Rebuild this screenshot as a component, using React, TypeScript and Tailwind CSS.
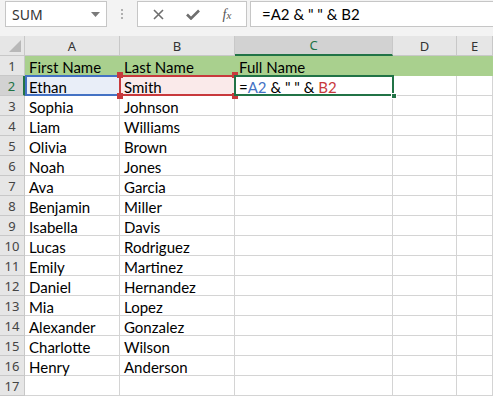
import React from "react";

const rows: [string, string][] = [
  ["Ethan", "Smith"],
  ["Sophia", "Johnson"],
  ["Liam", "Williams"],
  ["Olivia", "Brown"],
  ["Noah", "Jones"],
  ["Ava", "Garcia"],
  ["Benjamin", "Miller"],
  ["Isabella", "Davis"],
  ["Lucas", "Rodriguez"],
  ["Emily", "Martinez"],
  ["Daniel", "Hernandez"],
  ["Mia", "Lopez"],
  ["Alexander", "Gonzalez"],
  ["Charlotte", "Wilson"],
  ["Henry", "Anderson"],
];

const cellFont = { fontFamily: "Lato, 'Open Sans', sans-serif" };
const uiFont = { fontFamily: "'Noto Sans', 'Open Sans', sans-serif" };

function RowHead({ n, sel }: { n: number; sel?: boolean }) {
  return (
    <div
      className={
        "h-[20px] flex items-center justify-center pt-[2px] leading-none text-[13px] border-b border-[#c8c8c8] " +
        (sel
          ? "bg-[#d2d2d2] border-r-2 border-r-[#217346] text-[#217346]"
          : "bg-[#e6e6e6] border-r border-r-[#c8c8c8] text-[#444]")
      }
      style={uiFont}
    >
      {n}
    </div>
  );
}

function Cell({ children, green }: { children?: React.ReactNode; green?: boolean }) {
  return (
    <div
      className={
        "h-[20px] pl-[4px] pt-[2px] leading-[18px] text-[15px] text-black whitespace-nowrap " +
        (green ? "bg-[#a9d08e] border-b border-[#a9d08e]" : "border-r border-b border-[#d4d4d4]")
      }
      style={cellFont}
    >
      {children}
    </div>
  );
}

function ColHead({ l }: { l: string }) {
  return (
    <div
      className="h-[20px] bg-[#e6e6e6] border-r border-b border-[#c8c8c8] flex items-center justify-center pt-[1px] leading-none text-[13px] text-[#333]"
      style={uiFont}
    >
      {l}
    </div>
  );
}

export default function App() {
  return (
    <div className="w-[493px] h-[398px] overflow-hidden bg-white relative">
      {/* Toolbar */}
      <div className="h-[36px] bg-[#f3f3f3] flex items-start pt-[1px]">
        <div
          className="ml-[5px] w-[102px] h-[26px] bg-white border border-[#c6c6c6] flex items-center justify-between pl-[6px] pr-[6px] text-[14px] text-[#333]"
          style={uiFont}
        >
          <span>SUM</span>
          <svg width="9" height="5" viewBox="0 0 9 5">
            <path d="M0 0 L9 0 L4.5 5 Z" fill="#7a7a7a" />
          </svg>
        </div>
        <div className="w-[30px] h-[26px] flex flex-col items-center justify-center gap-[2px]">
          <div className="w-[2px] h-[2px] bg-[#b0b0b0]" />
          <div className="w-[2px] h-[2px] bg-[#b0b0b0]" />
          <div className="w-[2px] h-[2px] bg-[#b0b0b0]" />
        </div>
        <div className="w-[110px] h-[26px] bg-white border border-[#c6c6c6] flex items-center">
          <div className="w-[38px] flex justify-center pl-[3px]">
            <svg width="11" height="11" viewBox="0 0 11 11">
              <path d="M1 1 L10 10 M10 1 L1 10" stroke="#6e6e6e" strokeWidth="1.6" />
            </svg>
          </div>
          <div className="w-[34px] flex justify-center">
            <svg width="14" height="11" viewBox="0 0 14 11">
              <path d="M1 5.5 L5 9.5 L13 1.5" stroke="#6e6e6e" strokeWidth="2.6" fill="none" />
            </svg>
          </div>
          <div
            className="w-[34px] flex justify-center text-[14px] italic text-[#555]"
            style={{ fontFamily: "'Liberation Serif', serif" }}
          >
            f<span className="text-[11px] mt-[3px]">x</span>
          </div>
        </div>
        <div
          className="ml-[3px] flex-1 h-[26px] bg-white border border-r-0 border-[#c6c6c6] flex items-center pl-[11px] text-[15px] text-black"
          style={cellFont}
        >
          =A2 &amp; " " &amp; B2
        </div>
      </div>

      {/* Grid */}
      <div className="grid grid-cols-[25px_95px_115px_158px_64px_1fr]">
        {/* header */}
        <div className="h-[20px] bg-[#e6e6e6] border-r border-b border-[#c8c8c8] relative">
          <svg className="absolute right-[3px] bottom-[3px]" width="12" height="12" viewBox="0 0 12 12">
            <path d="M12 0 L12 12 L0 12 Z" fill="#b8b8b8" />
          </svg>
        </div>
        <ColHead l="A" />
        <ColHead l="B" />
        <div
          className="h-[20px] bg-[#d2d2d2] border-r border-[#c8c8c8] border-b-2 border-b-[#217346] flex items-center justify-center pt-[1px] leading-none text-[13px] text-[#217346]"
          style={uiFont}
        >
          C
        </div>
        <ColHead l="D" />
        <ColHead l="E" />

        {/* row 1 */}
        <RowHead n={1} />
        <Cell green>First Name</Cell>
        <Cell green>Last Name</Cell>
        <Cell green>Full Name</Cell>
        <Cell green />
        <Cell green />

        {/* row 2 */}
        <RowHead n={2} sel />
        <div className="relative z-10">
          <div
            className="h-[20px] pl-[4px] pt-[2px] leading-[18px] text-[15px] bg-[#e9eef8]"
            style={cellFont}
          >
            Ethan
          </div>
          <div className="absolute -top-[1px] left-0 -right-[1px] bottom-0 border-2 border-[#4472c4]" />
        </div>
        <div className="relative z-20">
          <div
            className="h-[20px] pl-[4px] pt-[2px] leading-[18px] text-[15px] bg-[#faeaea]"
            style={cellFont}
          >
            Smith
          </div>
          <div className="absolute -top-[1px] -left-[1px] -right-[1px] bottom-0 border-2 border-[#c8393c]" />
          <div className="absolute -top-[4px] -left-[3px] w-[6px] h-[6px] bg-[#c8393c]" />
          <div className="absolute -bottom-[3px] -left-[3px] w-[6px] h-[6px] bg-[#c8393c]" />
          <div className="absolute -top-[4px] -right-[3px] w-[6px] h-[6px] bg-[#c8393c]" />
          <div className="absolute -bottom-[3px] -right-[3px] w-[6px] h-[6px] bg-[#c8393c]" />
        </div>
        <div className="relative z-30">
          <div
            className="h-[20px] pl-[4px] pt-[2px] leading-[18px] text-[15px] bg-white whitespace-nowrap"
            style={cellFont}
          >
            =<span className="text-[#4472c4]">A2</span> &amp; " " &amp;{" "}
            <span className="text-[#c8393c]">B2</span>
          </div>
          <div className="absolute -top-[1px] -left-[1px] -right-[1px] bottom-0 border-2 border-[#217346]" />
          <div className="absolute -bottom-[3px] -right-[4px] w-[6px] h-[6px] bg-[#217346] border border-white" />
        </div>
        <Cell />
        <Cell />

        {rows.slice(1).map(([f, l], i) => (
          <React.Fragment key={i}>
            <RowHead n={i + 3} />
            <Cell>{f}</Cell>
            <Cell>{l}</Cell>
            <Cell />
            <Cell />
            <Cell />
          </React.Fragment>
        ))}
        <RowHead n={17} />
        <Cell />
        <Cell />
        <Cell />
        <Cell />
        <Cell />
      </div>
    </div>
  );
}
